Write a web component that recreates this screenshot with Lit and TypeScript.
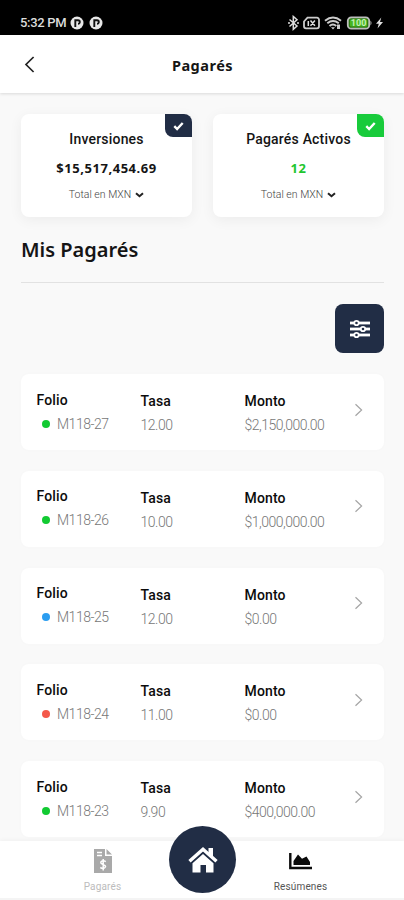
import { LitElement, html, svg, css } from "lit";
import { customElement, property } from "lit/decorators.js";

const check = html`<svg width="13" height="10" viewBox="0 0 12 10">
  <path d="M1.8 5.2 4.6 8 10.2 2" fill="none" stroke="#fff" stroke-width="2.4" />
</svg>`;

@customElement("status-bar")
class StatusBar extends LitElement {
  static styles = css`
    :host {
      display: flex;
      box-sizing: border-box;
      height: 35px;
      padding: 11px 20px 0;
      background: #000;
      color: #dcdcdc;
      font: 500 13px/24px Roboto, sans-serif;
      justify-content: space-between;
      align-items: flex-start;
    }
    .side { display: flex; align-items: center; height: 24px; }
    .time { width: 50px; letter-spacing: -0.3px; white-space: nowrap; }
    .p { margin-right: 5px; }
  `;
  render() {
    const disc = html`<svg class="p" width="14" height="14" viewBox="0 0 14 14">
      <circle cx="7" cy="7" r="6.5" fill="#e8e8e8" />
      <path d="M5.3 11V4.3H8a1.7 1.7 0 0 1 0 3.6" fill="none" stroke="#111" stroke-width="1.9" />
    </svg>`;
    return html`
      <div class="side"><span class="time">5:32 PM</span>${disc}${disc}</div>
      <div class="side">
        <svg width="96" height="16" viewBox="0 0 96 16">
          <path d="M1.5 4.5 9 11l-3.7 3.3V1.5L9 4.8 1.5 11.5M0 8h2M9 8h2" fill="none" stroke="#ddd" stroke-width="1.5" />
          <path d="M19.5 2.7H29a2 2 0 0 1 2 2v6.6a2 2 0 0 1-2 2H18a2 2 0 0 1-2-2V6.5z" fill="none" stroke="#ccc" stroke-width="1.8" />
          <path d="M20.3 6v5M22.5 5.5l4.4 5.2M26.9 5.5l-4.4 5.2" stroke="#ddd" stroke-width="1.5" />
          <path d="M37 5.7Q45 -.7 53 5.7M39.3 8.3Q45 3.8 50.8 8.3M41.5 10.9Q45 8 48.3 10.9" fill="none" stroke="#ccc" stroke-width="2" />
          <path d="M43 12.2h4L45 14.5zM49 9.5h3v4.5h-3z" fill="#ccc" />
          <rect x="59.8" y="2.3" width="21.4" height="11.4" rx="3.5" fill="#2c7a12" stroke="#bdbdbd" stroke-width="1.8" />
          <path d="M82.5 5.5q2 2.5 0 5z" fill="#bdbdbd" />
          <rect x="62" y="4.5" width="17" height="7" rx="1" fill="#48b51f" />
          <text x="70.6" y="11.2" font-size="9" font-weight="700" fill="#c4efb4" text-anchor="middle">100</text>
          <path d="M93.3 2.5 88 8.8h2.8l-1.3 4.7 5.5-6.6H92z" fill="#e0e0e0" />
        </svg>
      </div>`;
  }
}

@customElement("summary-card")
class SummaryCard extends LitElement {
  @property() label = "";
  @property() value = "";
  @property() tone = "navy";
  static styles = css`
    :host { display: block; }
    .card {
      position: relative;
      height: 103px;
      border-radius: 8px;
      background: #fff;
      box-shadow: 0 3px 14px rgba(0, 0, 0, 0.055);
      text-align: center;
      font-family: Roboto, sans-serif;
      color: #151515;
    }
    .badge {
      position: absolute;
      top: 0;
      right: 0;
      width: 27px;
      height: 23px;
      display: grid;
      place-items: center;
      border-radius: 0 8px 0 8px;
      background: #212d45;
    }
    .green .badge { background: #18cb3b; }
    .label { padding-top: 16px; font-size: 14px; line-height: 18px; font-weight: 500; letter-spacing: 0.2px; }
    .value { margin-top: 11px; font: 700 13px/18px "Noto Sans", sans-serif; letter-spacing: 0.55px; }
    .green .value { color: #1fc62f; }
    .total {
      display: flex;
      justify-content: center;
      align-items: center;
      gap: 4px;
      margin-top: 10px;
      font-size: 10.5px;
      line-height: 16px;
      font-weight: 300;
      color: #444;
    }
  `;
  render() {
    return html`<div class="card ${this.tone}">
      <div class="badge">${check}</div>
      <div class="label">${this.label}</div>
      <div class="value">${this.value}</div>
      <div class="total">
        <span>Total en MXN</span>
        <svg width="9" height="6" viewBox="0 0 9 6"><path d="M1 1.2 4.5 4.2 8 1.2" fill="none" stroke="#222" stroke-width="2" /></svg>
      </div>
    </div>`;
  }
}

@customElement("note-row")
class NoteRow extends LitElement {
  @property() folio = "";
  @property() tasa = "";
  @property() monto = "";
  @property() status = "green";
  static styles = css`
    :host { display: block; }
    .row {
      display: grid;
      grid-template-columns: 104px 104px 109px 1fr;
      box-sizing: border-box;
      height: 76px;
      padding: 16.5px 0 0 15.5px;
      border-radius: 8px;
      background: #fff;
      box-shadow: 0 0 5px rgba(0, 0, 0, 0.015);
      font-family: Roboto, sans-serif;
    }
    .head { font-size: 14px; line-height: 18px; font-weight: 500; letter-spacing: 0.15px; color: #0c0c0c; }
    .val { margin-top: 6px; font-size: 14px; line-height: 18px; font-weight: 300; letter-spacing: -0.5px; color: #777; white-space: nowrap; }
    .lower { padding-top: 1.5px; }
    .id { display: flex; align-items: center; gap: 7px; padding-left: 5.5px; }
    .dot { width: 8px; height: 8px; border-radius: 50%; background: #12ca32; }
    .blue { background: #2b9df0; }
    .red { background: #f4584a; }
    .chev { padding-top: 12px; margin-left: 0.5px; }
  `;
  render() {
    return html`<div class="row">
      <div><div class="head">Folio</div><div class="val id"><i class="dot ${this.status}"></i><span>${this.folio}</span></div></div>
      <div class="lower"><div class="head">Tasa</div><div class="val">${this.tasa}</div></div>
      <div class="lower"><div class="head">Monto</div><div class="val">${this.monto}</div></div>
      <svg class="chev" width="9" height="14" viewBox="0 0 9 14"><path d="M1.5 1.2 7.6 7l-6.1 5.8" fill="none" stroke="#a5a5a5" stroke-width="1.2" /></svg>
    </div>`;
  }
}

@customElement("app-root")
class AppRoot extends LitElement {
  static styles = css`
    :host {
      display: flex;
      flex-direction: column;
      height: 900px;
      overflow: hidden;
      background: #f9f9f9;
      font-family: Roboto, sans-serif;
      color: #151515;
    }
    .header {
      display: grid;
      grid-template-columns: 46px 1fr 46px;
      align-items: center;
      flex: none;
      height: 58px;
      background: #fff;
      box-shadow: 0 1px 3px rgba(0, 0, 0, 0.13);
    }
    .back { margin-left: 24px; }
    .title { padding: 2px 0 0 1px; text-align: center; font: 700 14.5px/20px "Noto Sans", sans-serif; letter-spacing: 0.5px; }
    .main { flex: 1; min-height: 0; overflow: hidden; padding: 21px 20px 0 21px; }
    .cards { display: grid; grid-template-columns: 171px 171px; gap: 21px; }
    .section {
      box-sizing: border-box;
      height: 66px;
      margin: 0 0 21px;
      padding-top: 19px;
      border-bottom: 1px solid #e2e2e2;
      font: 600 20px/28px "Noto Sans", sans-serif;
    }
    .tools { display: flex; justify-content: flex-end; }
    .filter { display: grid; place-items: center; width: 49px; height: 49px; border-radius: 8px; background: #212d45; }
    .list { display: flex; flex-direction: column; gap: 20.8px; margin-top: 21px; }
    .nav {
      position: relative;
      flex: none;
      display: grid;
      grid-template-columns: 1fr 1fr;
      box-sizing: border-box;
      height: 59px;
      background: #fff;
      border-bottom: 2px solid #f4f4f4;
      box-shadow: 0 -1px 4px rgba(0, 0, 0, 0.04);
    }
    .tab { display: flex; flex-direction: column; align-items: center; font-size: 10px; line-height: 12px; letter-spacing: 0.15px; color: #555; }
    .tab svg { height: 24px; margin: 8px 0 8px; }
    .left { padding-left: 3px; color: #bcbcbc; }
    .right { padding-right: 5px; }
    .home {
      position: absolute;
      left: 169px;
      top: -15px;
      width: 67px;
      height: 67px;
      display: grid;
      place-items: center;
      border-radius: 50%;
      background: #212d45;
    }
  `;
  render() {
    const rows = [
      ["M118-27", "12.00", "$2,150,000.00", "green"],
      ["M118-26", "10.00", "$1,000,000.00", "green"],
      ["M118-25", "12.00", "$0.00", "blue"],
      ["M118-24", "11.00", "$0.00", "red"],
      ["M118-23", "9.90", "$400,000.00", "green"],
    ];
    const sliders = [
      [4, 6.5],
      [10, 13],
      [16, 6.5],
    ];
    return html`
      <status-bar></status-bar>
      <div class="header">
        <svg class="back" width="11" height="17" viewBox="0 0 11 17"><path d="M9.6 1 2 8.5 9.6 16" fill="none" stroke="#222" stroke-width="1.7" /></svg>
        <div class="title">Pagarés</div>
      </div>
      <div class="main">
        <div class="cards">
          <summary-card label="Inversiones" value="$15,517,454.69"></summary-card>
          <summary-card label="Pagarés Activos" value="12" tone="green"></summary-card>
        </div>
        <div class="section">Mis Pagarés</div>
        <div class="tools">
          <div class="filter">
            <svg width="20" height="20" viewBox="0 0 20 20">
              ${sliders.map(
                ([y, x]) => svg`<path d="M0 ${y}H20" stroke="#fff" stroke-width="2.8" />
                <circle cx=${x} cy=${y} r="2.2" fill="#212d45" stroke="#fff" stroke-width="1.8" />`
              )}
            </svg>
          </div>
        </div>
        <div class="list">
          ${rows.map((r) => html`<note-row folio=${r[0]} tasa=${r[1]} monto=${r[2]} status=${r[3]}></note-row>`)}
        </div>
      </div>
      <div class="nav">
        <div class="tab left">
          <svg width="18" height="24" viewBox="0 0 18 24">
            <path d="M0 0H11V7H18V24H0zM12.5 0 18 5.5H12.5z" fill="#a9a9a9" />
            <path d="M3 3.5h5M3 6.5h5" stroke="#fff" stroke-width="1.4" />
            <path d="M11.8 12.6Q9 11 7 12.8C5.7 15.8 12 15 11.5 17.8 10.5 20.2 8 19.6 6.3 18.5M9.2 10v11.5" fill="none" stroke="#fff" stroke-width="1.5" />
          </svg>
          <span>Pagarés</span>
        </div>
        <div class="tab right">
          <svg width="23" height="24" viewBox="0 0 23 24">
            <path d="M1.3 4V19H23" fill="none" stroke="#0b0b0b" stroke-width="2.4" />
            <path d="M4.500 16V12L9 5.500l4 4.200 4.500-2.200 3.500 5.500V16z" fill="#0b0b0b" />
          </svg>
          <span>Resúmenes</span>
        </div>
        <div class="home">
          <svg width="30" height="28" viewBox="0 0 30 28">
            <path d="M20.5 2H25V11l-4.5-3.8z" fill="#fff" />
            <path d="M1.5 15.3 15 3.3l13.5 12" fill="none" stroke="#fff" stroke-width="3.4" />
            <path d="M15 7.9 25.5 17.2V26.5H18V19H12.5V26.5H4.5V17.2z" fill="#fff" />
            <path d="M4 16.5 15 6.8l11 9.7" fill="none" stroke="#212d45" stroke-width="1" />
          </svg>
        </div>
      </div>`;
  }
}
